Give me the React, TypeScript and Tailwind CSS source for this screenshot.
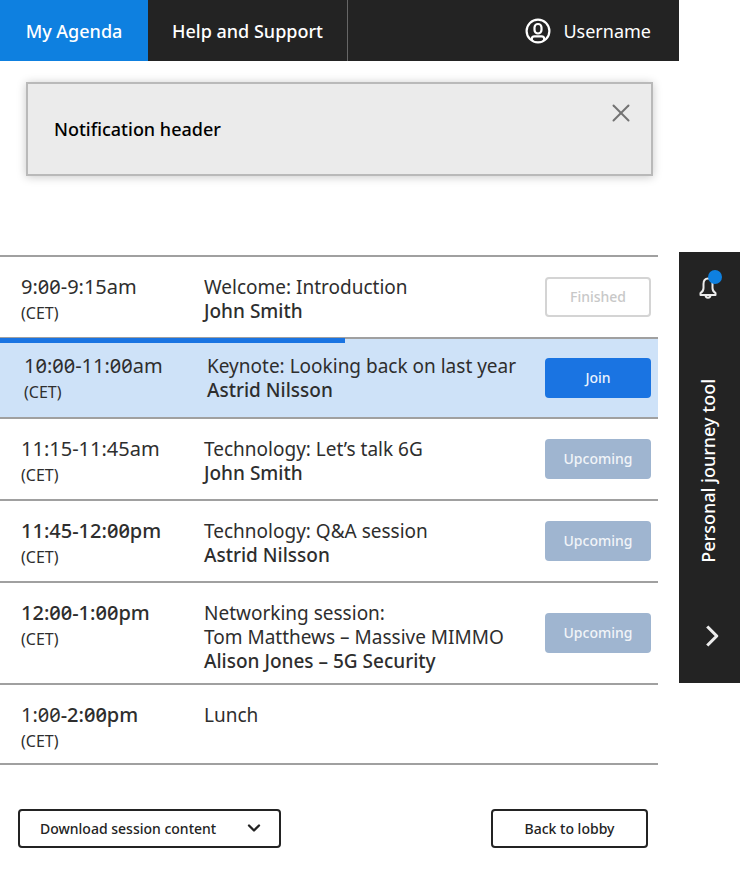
import { ChevronDown, ChevronRight, X } from "lucide-react";

type Status = "Finished" | "Join" | "Upcoming";

type Session = {
  start: string;
  end: string;
  startBold?: boolean;
  endBold?: boolean;
  title: string;
  detail?: string;
  speaker?: string;
  status?: Status;
  height: string;
};

const sessions: Session[] = [
  { start: "9:00", end: "-9:15am", title: "Welcome: Introduction", speaker: "John Smith", status: "Finished", height: "h-[82px]" },
  { start: "10:00", end: "-11:00am", title: "Keynote: Looking back on last year", speaker: "Astrid Nilsson", status: "Join", height: "h-[80px]" },
  { start: "11:15", end: "-11:45am", title: "Technology: Let’s talk 6G", speaker: "John Smith", status: "Upcoming", height: "h-[82px]" },
  { start: "11:45", end: "-12:00pm", startBold: true, endBold: true, title: "Technology: Q&A session", speaker: "Astrid Nilsson", status: "Upcoming", height: "h-[82px]" },
  { start: "12:00", end: "-1:00pm", startBold: true, endBold: true, title: "Networking session:", detail: "Tom Matthews – Massive MIMMO", speaker: "Alison Jones – 5G Security", status: "Upcoming", height: "h-[102px]" },
  { start: "1:00", end: "-2:00pm", endBold: true, title: "Lunch", height: "h-[80px]" },
];

const statusStyle: Record<Status, string> = {
  Finished: "border-2 border-[#d4d4d4] bg-white text-[#c8c8c8]",
  Join: "bg-[#1a74e2] text-[#eaf2fd]",
  Upcoming: "bg-[#9fb5d0] text-[#f1f4f8]",
};

function UserIcon() {
  return (
    <svg viewBox="0 0 26 26" className="size-[26px]" fill="none" stroke="currentColor" strokeWidth="2.2" aria-hidden="true">
      <circle cx="13" cy="13" r="11.4" />
      <rect x="9.5" y="6" width="7" height="9.5" rx="3.500" />
      <path d="M6.800 22v-1.200c0-1.500 1-2.500 2.700-2.500h7c1.700 0 2.700 1 2.700 2.500V22" />
    </svg>
  );
}

function BellIcon() {
  return (
    <svg viewBox="0 0 20 22" className="h-[22px] w-5" fill="none" stroke="currentColor" strokeWidth="2" strokeLinejoin="round" aria-hidden="true">
      <path d="M10 1.500C6.800 1.500 5.500 4 5.500 7v4c0 2.500-.9 3.800-3 5.200V18h15v-1.800c-2.100-1.400-3-2.700-3-5.200V7c0-3-1.300-5.500-4.500-5.500Z" />
      <path d="M7.500 18c0 3.600 5 3.600 5 0" />
    </svg>
  );
}

function SessionRow({ session }: { session: Session }) {
  const live = session.status === "Join";
  const cell = live
    ? "border-b-2 border-[#a0a0a0] bg-[#cee2f8] pt-[15px] align-top"
    : "border-b-2 border-[#a0a0a0] pt-[18px] align-top";
  return (
    <tr className={`relative ${session.height}`}>
      <td className={`${cell} w-[204px] ${live ? "pl-6" : "pl-[21px]"}`}>
        {live && <div className="absolute top-[-1px] left-0 h-[5px] w-[52.5%] bg-[#1a74e2]" />}
        <div className="text-xl leading-6">
          <span className={session.startBold ? "font-medium" : ""}>{session.start}</span>
          <span className={session.endBold ? "font-medium" : ""}>{session.end}</span>
        </div>
        <div className="text-base leading-7">(CET)</div>
      </td>
      <td className={`${cell} ${live ? "pl-[3px]" : ""}`}>
        <div>{session.title}</div>
        {session.detail && <div>{session.detail}</div>}
        {session.speaker && <div className="font-medium">{session.speaker}</div>}
      </td>
      <td className={`border-b-2 border-[#a0a0a0] align-middle ${live ? "bg-[#cee2f8]" : ""} w-[113px]`}>
        {session.status && (
          <button type="button" disabled={!live} className={`h-10 w-[106px] rounded-[4px] text-sm font-medium ${statusStyle[session.status]}`}>
            {session.status}
          </button>
        )}
      </td>
    </tr>
  );
}

export default function App() {
  return (
    <div className="flex items-start bg-white font-['Noto_Sans',sans-serif] text-[19px] leading-6 text-[#2e2e2e] slashed-zero">
      <div className="min-w-0 flex-1">
        <nav className="flex h-[61px] items-stretch bg-[#232323] text-lg font-medium text-white">
          <a href="#agenda" aria-current="page" className="flex w-[148px] items-center justify-center bg-[#0e80e0]">My Agenda</a>
          <a href="#help" className="flex w-[200px] items-center justify-center border-r border-[#666]">Help and Support</a>
          <a href="#account" className="ml-auto flex items-center gap-3 pr-7 font-normal">
            <UserIcon />
            Username
          </a>
        </nav>

        <section className="mx-[26px] mt-[21px] flex h-[94px] items-start justify-between border-2 border-[#b9b9b9] bg-[#ebebeb] shadow-[0_1px_9px_rgba(0,0,0,0.22)]">
          <h2 className="self-center pl-[26px] text-lg font-medium text-black">Notification header</h2>
          <button type="button" aria-label="Close notification" className="mt-3.5 mr-[15px] text-[#737373]">
            <X className="size-[30px]" strokeWidth={1.6} />
          </button>
        </section>

        <main className="mt-[79px] pr-[21px]">
          <table className="w-full border-separate border-spacing-0 border-t-2 border-[#a0a0a0]">
            <tbody>
              {sessions.map((session) => (
                <SessionRow key={session.start} session={session} />
              ))}
            </tbody>
          </table>
        </main>

        <footer className="mt-11 mr-[31px] ml-[18px] flex justify-between text-sm font-medium text-[#232323]">
          <div className="relative">
            <select aria-label="Download session content" className="h-[39px] w-[263px] appearance-none rounded-[4px] border-2 border-[#232323] bg-white pl-5">
              <option>Download session content</option>
            </select>
            <ChevronDown className="pointer-events-none absolute top-[9px] right-[17px] size-5" strokeWidth={2.800} />
          </div>
          <button type="button" className="h-[39px] w-[157px] rounded-[4px] border-2 border-[#232323] bg-white">Back to lobby</button>
        </footer>
      </div>

      <aside className="mt-[252px] flex h-[431px] w-[61px] shrink-0 flex-col items-center bg-[#232323] pt-[25px] pr-[3px] pb-7 text-lg font-medium text-white">
        <button type="button" aria-label="Notifications" className="relative text-[#ececec]">
          <BellIcon />
          <span className="absolute -top-[7px] -right-1 size-3.5 rounded-full bg-[#0e80e0]" />
        </button>
        <span className="mt-20 rotate-180 [writing-mode:vertical-rl]">Personal journey tool</span>
        <button type="button" aria-label="Open personal journey tool" className="mt-auto ml-2 text-[#ececec]">
          <ChevronRight className="size-[38px]" strokeWidth={2} strokeLinecap="butt" />
        </button>
      </aside>
    </div>
  );
}
